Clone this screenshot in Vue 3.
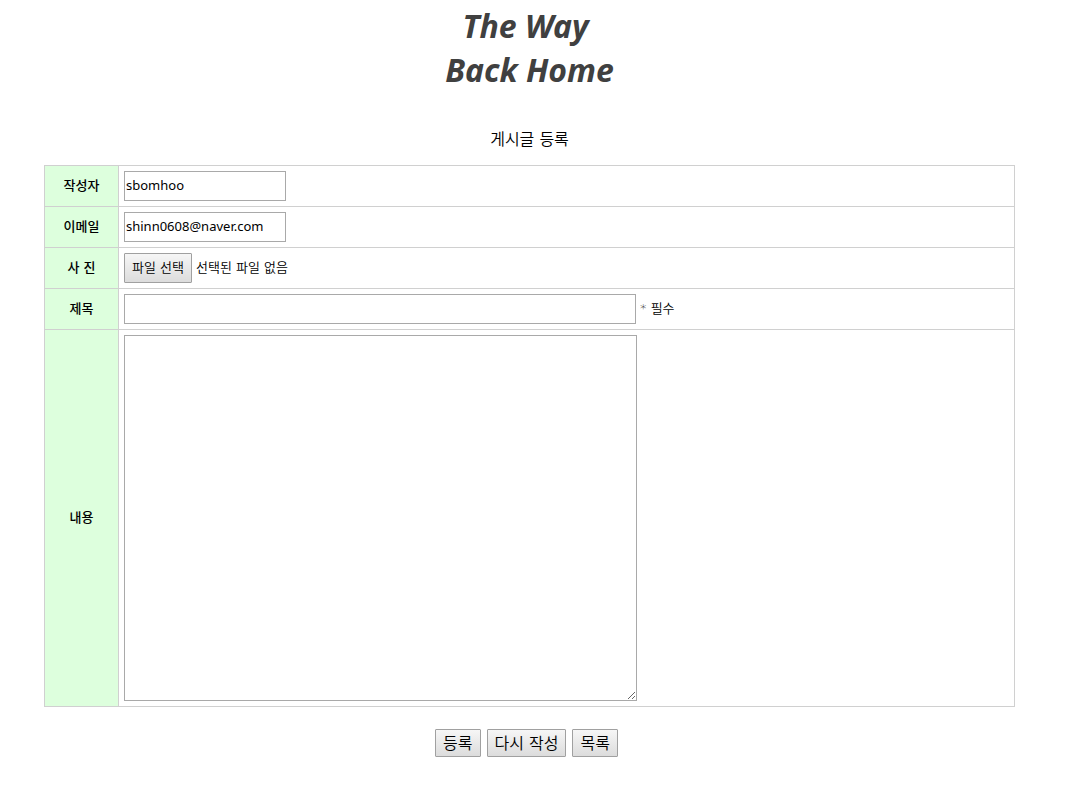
<script setup>
import { ref } from 'vue'

const initial = { writer: 'sbomhoo', email: 'shinn0608@naver.com', title: '', content: '' }
const form = ref({ ...initial })
const fileInput = ref(null)
const fileName = ref('')

function pickFile() {
  fileInput.value.click()
}

function onFile(event) {
  fileName.value = event.target.files[0]?.name ?? ''
}

function reset() {
  form.value = { ...initial }
  fileInput.value.value = ''
  fileName.value = ''
}
</script>

<template>
  <main class="page">
    <header class="logo">
      <span class="logo-top">The Way</span>
      <span>Back Home</span>
    </header>
    <h1 class="title">게시글 등록</h1>
    <form @submit.prevent @reset.prevent="reset">
      <table class="sheet">
        <tbody>
          <tr>
            <th scope="row"><label for="writer">작성자</label></th>
            <td><input id="writer" v-model="form.writer" class="box short" type="text" /></td>
          </tr>
          <tr>
            <th scope="row"><label for="email">이메일</label></th>
            <td><input id="email" v-model="form.email" class="box short" type="text" /></td>
          </tr>
          <tr>
            <th scope="row"><label for="photo">사 진</label></th>
            <td>
              <div class="line">
                <input id="photo" ref="fileInput" type="file" hidden @change="onFile" />
                <button class="btn file" type="button" @click="pickFile">파일 선택</button>
                <span>{{ fileName || '선택된 파일 없음' }}</span>
              </div>
            </td>
          </tr>
          <tr>
            <th scope="row"><label for="subject">제목</label></th>
            <td>
              <div class="line">
                <input id="subject" v-model="form.title" class="box long" type="text" />
                <span>* 필수</span>
              </div>
            </td>
          </tr>
          <tr>
            <th scope="row"><label for="content">내용</label></th>
            <td><textarea id="content" v-model="form.content" class="box area"></textarea></td>
          </tr>
        </tbody>
      </table>
      <div class="actions">
        <button class="btn" type="submit">등록</button>
        <button class="btn" type="reset">다시 작성</button>
        <button class="btn" type="button">목록</button>
      </div>
    </form>
  </main>
</template>

<style>
body {
  margin: 0;
  background: #fff;
}
</style>

<style scoped>
.page {
  box-sizing: border-box;
  padding: 4px 63px 40px 44px;
  font-family: "DejaVu Sans", "Noto Sans CJK KR", sans-serif;
  font-size: 13px;
  font-weight: 350;
  color: #000;
}

.logo {
  display: flex;
  flex-direction: column;
  align-items: center;
  font-family: "Noto Sans", sans-serif;
  font-size: 32px;
  font-weight: 700;
  font-style: italic;
  line-height: 44px;
  color: #404040;
}

.logo-top {
  padding-right: 8px;
}

.title {
  margin: 36px 0 13px;
  font-size: 16px;
  font-weight: 350;
  line-height: 24px;
  text-align: center;
}

.sheet {
  width: 100%;
  border-collapse: collapse;
}

.sheet th,
.sheet td {
  border: 1px solid #d0d0d0;
  line-height: 20px;
}

.sheet th {
  box-sizing: border-box;
  width: 74px;
  padding: 0;
  background: #dfd;
  font-size: 13px;
  font-weight: 500;
  text-align: center;
}

.sheet td {
  padding: 5px;
}

.line {
  display: flex;
  align-items: center;
  gap: 4px;
}

.box {
  display: block;
  box-sizing: border-box;
  height: 30px;
  margin: 0;
  padding: 0 1px 2px;
  border: 1px solid #a9a9a9;
  border-radius: 0;
  background: #fff;
  font-family: "Noto Sans", "Noto Sans CJK KR", sans-serif;
  font-size: 13px;
  font-weight: 400;
  color: #000;
}

.short {
  width: 162px;
}

.long {
  width: 512px;
}

.area {
  width: 513px;
  height: 366px;
  padding: 2px;
  resize: both;
}

.btn {
  box-sizing: border-box;
  height: 28px;
  margin: 0;
  padding: 2px 7px 0;
  border: 1px solid #a0a0a0;
  border-radius: 1px;
  background: linear-gradient(#f6f6f6, #dcdcdc);
  font-family: inherit;
  font-size: 16px;
  font-weight: 350;
  line-height: 24px;
  color: #000;
  white-space: nowrap;
}

.file {
  height: 30px;
  padding: 0 7px;
  font-size: 13px;
}

.actions {
  display: flex;
  justify-content: center;
  gap: 6px;
  margin-top: 22px;
  padding-right: 6px;
}
</style>
